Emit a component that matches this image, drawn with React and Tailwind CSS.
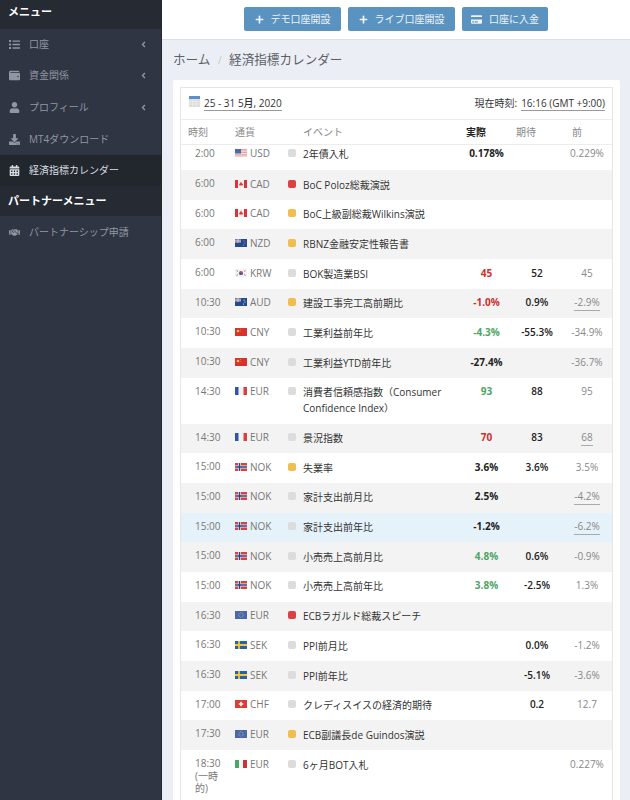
import { FaList, FaWallet, FaUser, FaDownload, FaCalendarAlt, FaHandshake, FaAngleLeft, FaPlus, FaCreditCard } from 'react-icons/fa'

const font = { fontFamily: '"Open Sans", "Noto Sans CJK JP", sans-serif' }

function Flag({ code }) {
  const cls = 'w-[12px] h-[8px] shrink-0'
  if (code === 'us') return (
    <svg className={cls} viewBox="0 0 12 8"><rect width="12" height="8" fill="#e8a0a0" /><rect y="1.5" width="12" height="1.2" fill="#f3e4e4" /><rect y="4" width="12" height="1.2" fill="#f3e4e4" /><rect y="6.5" width="12" height="1.2" fill="#f3e4e4" /><rect width="6" height="4.5" fill="#4a6aa5" /></svg>
  )
  if (code === 'ca') return (
    <svg className={cls} viewBox="0 0 12 8"><rect width="12" height="8" fill="#f5f0f0" /><rect width="3" height="8" fill="#d9343a" /><rect x="9" width="3" height="8" fill="#d9343a" /><path d="M6 1.5 7.2 4 8 3.6 7.6 5.6H4.4L4 3.6 4.8 4Z" fill="#d9343a" /></svg>
  )
  if (code === 'nz' || code === 'au') return (
    <svg className={cls} viewBox="0 0 12 8"><rect width="12" height="8" fill="#234a8c" /><rect width="6" height="4" fill="#6d7fa8" /><path d="M3 0v4M0 2h6" stroke="#e9c2c2" strokeWidth="1" /><circle cx="9" cy="2" r=".6" fill={code === 'nz' ? '#e88' : '#fff'} /><circle cx="10" cy="4" r=".6" fill={code === 'nz' ? '#e88' : '#fff'} /><circle cx="8.5" cy="6" r=".6" fill={code === 'nz' ? '#e88' : '#fff'} /></svg>
  )
  if (code === 'kr') return (
    <svg className={cls} viewBox="0 0 12 8"><rect width="12" height="8" fill="#f2f2f2" /><circle cx="6" cy="4" r="2" fill="#c9404a" /><path d="M4 4a2 2 0 0 0 4 0Z" fill="#3a5ea0" /><path d="M1.5 1.5l1.5 1M9 5.5l1.5 1M10.5 1.5 9 2.5M3 5.5l-1.5 1" stroke="#777" strokeWidth=".8" /></svg>
  )
  if (code === 'cn') return (
    <svg className={cls} viewBox="0 0 12 8"><rect width="12" height="8" fill="#d8322c" /><circle cx="3" cy="3" r="1.3" fill="#f2c94c" /><circle cx="5.5" cy="1.5" r=".4" fill="#f2c94c" /><circle cx="5.8" cy="3.2" r=".4" fill="#f2c94c" /></svg>
  )
  if (code === 'fr') return (
    <svg className={cls} viewBox="0 0 12 8"><rect width="12" height="8" fill="#f2f2f2" /><rect width="3.5" height="8" fill="#2f56a5" /><rect x="8.5" width="3.5" height="8" fill="#d8423c" /></svg>
  )
  if (code === 'no') return (
    <svg className={cls} viewBox="0 0 12 8"><rect width="12" height="8" fill="#d8423f" /><path d="M4.5 0v8M0 4h12" stroke="#f5f5f5" strokeWidth="3" /><path d="M4.5 0v8M0 4h12" stroke="#27478c" strokeWidth="1.5" /></svg>
  )
  if (code === 'eu') return (
    <svg className={cls} viewBox="0 0 12 8"><rect width="12" height="8" fill="#4a69ad" /><circle cx="6" cy="4" r="2.2" fill="none" stroke="#b9b88a" strokeWidth=".8" strokeDasharray=".8 .6" /></svg>
  )
  if (code === 'se') return (
    <svg className={cls} viewBox="0 0 12 8"><rect width="12" height="8" fill="#2a62a5" /><path d="M4 0v8M0 4h12" stroke="#f2c83c" strokeWidth="1.8" /></svg>
  )
  if (code === 'ch') return (
    <svg className={cls} viewBox="0 0 12 8"><rect width="12" height="8" fill="#dc3c36" /><path d="M6 1.8v4.4M3.8 4h4.4" stroke="#fff" strokeWidth="1.5" /></svg>
  )
  return (
    <svg className={cls} viewBox="0 0 12 8"><rect width="12" height="8" fill="#f5f5f5" /><rect width="4" height="8" fill="#4aa567" /><rect x="8" width="4" height="8" fill="#c9343a" /></svg>
  )
}

const rows = [
  { time: '2:00', flag: 'us', cur: 'USD', imp: 'n', ev: '2年債入札', act: '0.178%', prev: '0.229%', first: true },
  { time: '6:00', flag: 'ca', cur: 'CAD', imp: 'h', ev: 'BoC Poloz総裁演説' },
  { time: '6:00', flag: 'ca', cur: 'CAD', imp: 'm', ev: 'BoC上級副総裁Wilkins演説' },
  { time: '6:00', flag: 'nz', cur: 'NZD', imp: 'm', ev: 'RBNZ金融安定性報告書' },
  { time: '6:00', flag: 'kr', cur: 'KRW', imp: 'n', ev: 'BOK製造業BSI', act: '45', tone: 'r', fc: '52', prev: '45' },
  { time: '10:30', flag: 'au', cur: 'AUD', imp: 'm', ev: '建設工事完工高前期比', act: '-1.0%', tone: 'r', fc: '0.9%', prev: '-2.9%', rev: true },
  { time: '10:30', flag: 'cn', cur: 'CNY', imp: 'n', ev: '工業利益前年比', act: '-4.3%', tone: 'g', fc: '-55.3%', prev: '-34.9%' },
  { time: '10:30', flag: 'cn', cur: 'CNY', imp: 'n', ev: '工業利益YTD前年比', act: '-27.4%', prev: '-36.7%' },
  { time: '14:30', flag: 'fr', cur: 'EUR', imp: 'n', ev: '消費者信頼感指数（Consumer Confidence Index）', act: '93', tone: 'g', fc: '88', prev: '95' },
  { time: '14:30', flag: 'fr', cur: 'EUR', imp: 'n', ev: '景況指数', act: '70', tone: 'r', fc: '83', prev: '68', rev: true },
  { time: '15:00', flag: 'no', cur: 'NOK', imp: 'm', ev: '失業率', act: '3.6%', fc: '3.6%', prev: '3.5%' },
  { time: '15:00', flag: 'no', cur: 'NOK', imp: 'n', ev: '家計支出前月比', act: '2.5%', prev: '-4.2%', rev: true },
  { time: '15:00', flag: 'no', cur: 'NOK', imp: 'n', ev: '家計支出前年比', act: '-1.2%', prev: '-6.2%', rev: true, active: true },
  { time: '15:00', flag: 'no', cur: 'NOK', imp: 'n', ev: '小売売上高前月比', act: '4.8%', tone: 'g', fc: '0.6%', prev: '-0.9%' },
  { time: '15:00', flag: 'no', cur: 'NOK', imp: 'n', ev: '小売売上高前年比', act: '3.8%', tone: 'g', fc: '-2.5%', prev: '1.3%' },
  { time: '16:30', flag: 'eu', cur: 'EUR', imp: 'h', ev: 'ECBラガルド総裁スピーチ' },
  { time: '16:30', flag: 'se', cur: 'SEK', imp: 'n', ev: 'PPI前月比', fc: '0.0%', prev: '-1.2%' },
  { time: '16:30', flag: 'se', cur: 'SEK', imp: 'n', ev: 'PPI前年比', fc: '-5.1%', prev: '-3.6%' },
  { time: '17:00', flag: 'ch', cur: 'CHF', imp: 'n', ev: 'クレディスイスの経済的期待', fc: '0.2', prev: '12.7' },
  { time: '17:30', flag: 'eu', cur: 'EUR', imp: 'm', ev: 'ECB副議長de Guindos演説' },
  { time: '18:30 (一時的)', flag: 'it', cur: 'EUR', imp: 'n', ev: '6ヶ月BOT入札', prev: '0.227%' },
]

function Row({ row, index }) {
  let bg = index % 2 === 1 ? 'bg-[#f3f3f3]' : 'bg-white'
  if (row.active) bg = 'bg-[#e6f2fa]'
  const impColor = row.imp === 'h' ? 'bg-[#dc4040]' : row.imp === 'm' ? 'bg-[#f0bd4f]' : 'bg-[#dcdcdc]'
  const actColor = row.tone === 'r' ? 'text-[#cf2e2e]' : row.tone === 'g' ? 'text-[#4ea564]' : 'text-[#222222]'
  return (
    <div className={`grid grid-cols-[54px_53px_15px_158px_51px_50px_50px] text-[10px] leading-[16px] ${bg} ${row.first ? 'h-[25px]' : 'pt-[5.5px] pb-[7.2px]'}`}>
      <div className="pl-[14px] pr-[12px] pt-[1.5px] leading-[12.5px] text-[#777777]">{row.time}</div>
      <div className="flex items-start gap-[3px] text-[#777777]">
        <span className="h-[16px] flex items-center"><Flag code={row.flag} /></span>
        <span>{row.cur}</span>
      </div>
      <div className="pt-[4px]"><div className={`w-[8px] h-[8px] rounded-[2px] ${impColor}`} /></div>
      <div className="text-[#333333] pt-[1px]">{row.ev}</div>
      <div className={`text-center font-bold ${actColor}`}>{row.act}</div>
      <div className="text-center font-semibold text-[#222222]">{row.fc}</div>
      <div className="text-center text-[#888888]">
        <span className={row.rev ? 'border-b border-[#aaaaaa] pb-[1px]' : ''}>{row.prev}</span>
      </div>
    </div>
  )
}

function NavItem({ icon: Icon, label, arrow, active }) {
  return (
    <div className={`h-[31.6px] flex items-center pl-[9px] pr-[13px] text-[10px] ${active ? 'bg-[#22262d] text-[#d8dce2]' : 'text-[#8f97a3]'}`}>
      <Icon className="w-[11px] h-[11px] shrink-0" />
      <span className="ml-[9px] flex-1 whitespace-nowrap">{label}</span>
      {arrow && <FaAngleLeft className="w-[9px] h-[9px]" />}
    </div>
  )
}

function TopButton({ icon: Icon, label, width, small }) {
  return (
    <div className={`h-[24px] ${width} flex items-center justify-center gap-[7px] bg-[#5a93bf] rounded-[2px] text-[#eef4f9] text-[10px]`}>
      <Icon className={small ? 'w-[9px] h-[9px]' : 'w-[11px] h-[11px]'} />
      <span>{label}</span>
    </div>
  )
}

export default function App() {
  return (
    <div className="flex h-screen overflow-hidden bg-[#ebeff5]" style={font}>
      {/* Sidebar */}
      <aside className="w-[162px] shrink-0 bg-[#2f3542] border-r border-[#24272e]">
        <div className="h-[28.5px] bg-[#262a33] pl-[8px] pb-[5px] flex items-center text-[11px] font-bold text-white">メニュー</div>
        <NavItem icon={FaList} label="口座" arrow />
        <NavItem icon={FaWallet} label="資金関係" arrow />
        <NavItem icon={FaUser} label="プロフィール" arrow />
        <NavItem icon={FaDownload} label="MT4ダウンロード" />
        <NavItem icon={FaCalendarAlt} label="経済指標カレンダー" active />
        <div className="h-[30px] bg-[#262a33] pl-[8px] flex items-center text-[11px] font-bold text-white">パートナーメニュー</div>
        <NavItem icon={FaHandshake} label="パートナーシップ申請" />
      </aside>

      <main className="flex-1 min-w-0">
        {/* Top buttons */}
        <div className="h-[40px] bg-white border-b border-[#dcdfe4] flex justify-center items-start pt-[7px] gap-[7px]">
          <TopButton icon={FaPlus} label="デモ口座開設" width="w-[97px]" small />
          <TopButton icon={FaPlus} label="ライブ口座開設" width="w-[107px]" small />
          <TopButton icon={FaCreditCard} label="口座に入金" width="w-[86px]" />
        </div>

        {/* Breadcrumb */}
        <div className="pl-[11px] h-[40px] flex items-center text-[12.6px] text-[#5c6066]">
          <span>ホーム</span>
          <span className="mx-[7.5px] text-[#c4c8cc] text-[10px]">/</span>
          <span>経済指標カレンダー</span>
        </div>

        {/* Card */}
        <div className="ml-[11px] mr-[10px] bg-white rounded-[2px] p-[7px]">
          <div className="border border-[#e6e6e6] text-[#333333]">
            <div className="h-[32px] flex items-center justify-between pl-[8px] pr-[7px] border-b border-[#ececec] text-[10px]">
              <div className="flex items-center gap-[4px]">
                <svg className="w-[11px] h-[11px] mb-[4px]" viewBox="0 0 11 11">
                  <rect width="11" height="11" fill="#dddddd" />
                  <rect width="11" height="3" fill="#5b8fc7" />
                  <path d="M0 5.5h11M0 8h11M3.5 3v8M7 3v8" stroke="#f2f2f2" strokeWidth=".6" />
                </svg>
                <span className="font-medium border-b border-[#999999] leading-[14px]">25 - 31 5月, 2020</span>
              </div>
              <div className="flex items-center gap-[4px]">
                <span>現在時刻:</span>
                <span className="font-medium border-b border-[#999999] leading-[14px]">16:16 (GMT +9:00)</span>
              </div>
            </div>
            <div className="h-[25px] pt-[1px] flex items-center border-b border-[#ececec] text-[10px] text-[#888888]">
              <span className="ml-[7px] w-[47px]">時刻</span>
              <span className="w-[68px]">通貨</span>
              <span className="w-[163px]">イベント</span>
              <span className="w-[50px] font-bold text-[#222222]">実際</span>
              <span className="w-[56px]">期待</span>
              <span>前</span>
            </div>
            {rows.map((row, i) => <Row key={i} row={row} index={i} />)}
          </div>
        </div>
      </main>
    </div>
  )
}
